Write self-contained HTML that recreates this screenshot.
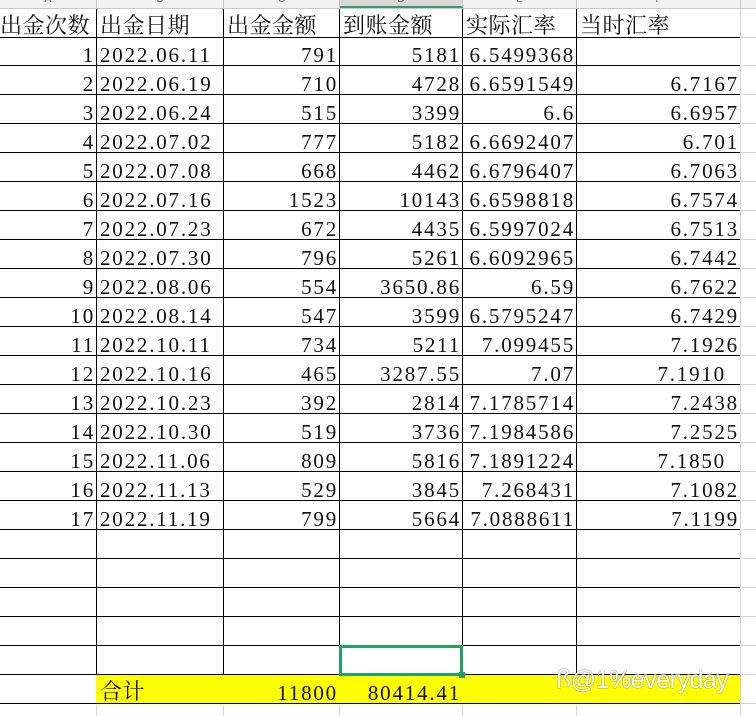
<!DOCTYPE html>
<html><head><meta charset="utf-8">
<style>
body{margin:0;width:756px;height:716px;overflow:hidden;background:#fff;position:relative;font-family:"Liberation Serif","Noto Serif CJK SC",serif;}
.hdr{position:absolute;top:0;left:0;width:756px;height:8px;background:#f2f2f2;border-bottom:1px solid #c8c8c8;overflow:hidden}
.hdr div{position:absolute;top:0;height:8px;border-right:1px solid #c8c8c8;box-sizing:border-box;font:10px "Liberation Sans",sans-serif;color:#666;text-align:center;line-height:0px}
.c{position:absolute;box-sizing:border-box;border-right:1px solid #000;border-bottom:1px solid #000;height:29px;line-height:37px;font-size:21px;color:#111;white-space:nowrap;overflow:hidden;padding:0 3px 0 4px;letter-spacing:1.8px}
.r{text-align:right;padding-right:1px}
.cn{font-family:"Noto Serif CJK SC","Noto Sans CJK SC",serif;letter-spacing:0.5px;font-size:22px;line-height:31px}
.g{position:absolute;left:740px;width:16px;height:1px;background:#d4d4d4}
.y{background:#ffff00}
</style></head><body>
<div class="hdr">
<div style="left:0;width:97px">A</div>
<div style="left:97px;width:127px">B</div>
<div style="left:224px;width:116px">C</div>
<div style="left:340px;width:123px;background:#d9d9d9;border-bottom:2px solid #2e9e6e">D</div>
<div style="left:463px;width:114px">E</div>
<div style="left:577px;width:164px">F</div>
</div>
<div id="grid"></div>
<div style="position:absolute;left:740px;top:9px;width:1px;height:707px;background:#d4d4d4"></div>
<div style="position:absolute;left:96px;top:705px;width:1px;height:11px;background:#d4d4d4"></div>
<div style="position:absolute;left:223px;top:705px;width:1px;height:11px;background:#d4d4d4"></div>
<div style="position:absolute;left:339px;top:705px;width:1px;height:11px;background:#d4d4d4"></div>
<div style="position:absolute;left:462px;top:705px;width:1px;height:11px;background:#d4d4d4"></div>
<div style="position:absolute;left:576px;top:705px;width:1px;height:11px;background:#d4d4d4"></div>
<div style="position:absolute;left:339px;top:645px;width:124px;height:31px;box-sizing:border-box;border:3px solid #21a366"></div>
<div style="position:absolute;left:459px;top:672px;width:6px;height:6px;background:#21a366"></div>
<div style="position:absolute;left:556px;top:662px;font:25px 'Liberation Sans',sans-serif;color:#fff;letter-spacing:-0.5px;text-shadow:0 0 1px #666,0 0 1px #666;">ꟗ@1%everyday</div>
<script>
const X=[0,96,223,339,462,576,740];
const rows=[
["出金次数","出金日期","出金金额","到账金额","实际汇率","当时汇率"],
["1","2022.06.11","791","5181","6.5499368",""],
["2","2022.06.19","710","4728","6.6591549","6.7167"],
["3","2022.06.24","515","3399","6.6","6.6957"],
["4","2022.07.02","777","5182","6.6692407","6.701"],
["5","2022.07.08","668","4462","6.6796407","6.7063"],
["6","2022.07.16","1523","10143","6.6598818","6.7574"],
["7","2022.07.23","672","4435","6.5997024","6.7513"],
["8","2022.07.30","796","5261","6.6092965","6.7442"],
["9","2022.08.06","554","3650.86","6.59","6.7622"],
["10","2022.08.14","547","3599","6.5795247","6.7429"],
["11","2022.10.11","734","5211","7.099455","7.1926"],
["12","2022.10.16","465","3287.55","7.07","7.1910 "],
["13","2022.10.23","392","2814","7.1785714","7.2438"],
["14","2022.10.30","519","3736","7.1984586","7.2525"],
["15","2022.11.06","809","5816","7.1891224","7.1850 "],
["16","2022.11.13","529","3845","7.268431","7.1082"],
["17","2022.11.19","799","5664","7.0888611","7.1199"],
["","","","","",""],["","","","","",""],["","","","","",""],["","","","","",""],["","","","","",""],
["","合计","11800","80414.41","",""]];
let h="";
rows.forEach((r,i)=>{
 const top=i==0?9:37+(i-1)*29, ht=i==0?29:29;
 r.forEach((t,j)=>{
  let cls="c";
  if(i==0||(i==23&&j==1))cls+=" cn"; else if(j!=1)cls+=" r";
  if(i==23&&j>0)cls+=" y";
  let pad=(j==0&&i==0)?"padding-left:0;":"";
  if(t.endsWith(" "))pad+="padding-right:14px;";
  h+=`<div class="${cls}" style="left:${X[j]}px;top:${top}px;width:${X[j+1]-X[j]+1}px;height:${ht}px;${pad}">${t.trim()}</div>`;
 });
 h+=`<div class="g" style="top:${top+ht-1}px"></div>`;
});
document.getElementById('grid').innerHTML=h;
</script>
</body></html>
